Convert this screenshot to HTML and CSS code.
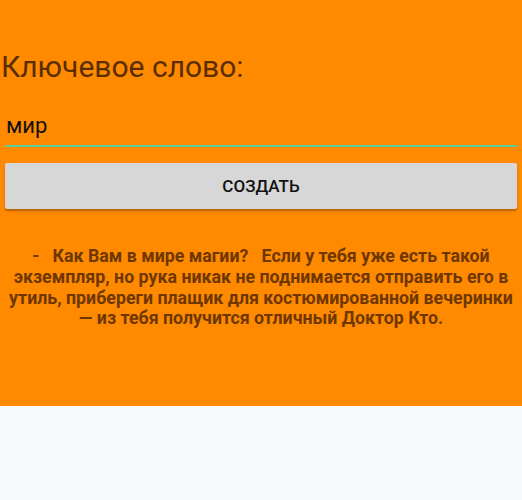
FILE: index.html
```html
<!DOCTYPE html>
<html>
<head>
<meta charset="utf-8">
<link rel="stylesheet" href="styles.css">
</head>
<body>
<div class="screen">
  <div class="label">Ключевое слово:</div>
  <div class="field">мир</div>
  <div class="btn">СОЗДАТЬ</div>
  <p class="result">-&nbsp;&nbsp;&nbsp;Как Вам в мире магии?&nbsp;&nbsp;&nbsp;Если у тебя уже есть такой экземпляр, но рука никак не поднимается отправить его в утиль, прибереги плащик для костюмированной вечеринки — из тебя получится отличный Доктор Кто.</p>
</div>
</body>
</html>
```
FILE: styles.css
```css
html, body {
  margin: 0;
  padding: 0;
  background: #f8f9fa;
}
.screen {
  background: #ff8a00;
  height: 406px;
  box-sizing: border-box;
  padding: 50px 5px 0 5px;
  font-family: Roboto, "Noto Sans", sans-serif;
  box-shadow: 0 1px 2px rgba(160, 80, 0, 0.4);
}
.label {
  font-size: 30px;
  color: #5a2e00;
  line-height: 34px;
  margin-left: -4px;
}
.field {
  margin-top: 29px;
  font-size: 22px;
  color: #111;
  line-height: 26px;
  padding: 0 0 6px 1px;
  border-bottom: 2px solid #5ccf9f;
}
.btn {
  margin-top: 16px;
  height: 46px;
  background: #d7d7d7;
  border-radius: 2px;
  box-shadow: 0 2px 2px rgba(120, 60, 0, 0.5);
  display: flex;
  align-items: center;
  justify-content: center;
  font-size: 17px;
  font-weight: 500;
  color: #111;
}
.result {
  margin: 37px 0 0 0;
  text-align: center;
  font-weight: bold;
  font-size: 17.8px;
  line-height: 20.8px;
  color: #6e3700;
}
```
